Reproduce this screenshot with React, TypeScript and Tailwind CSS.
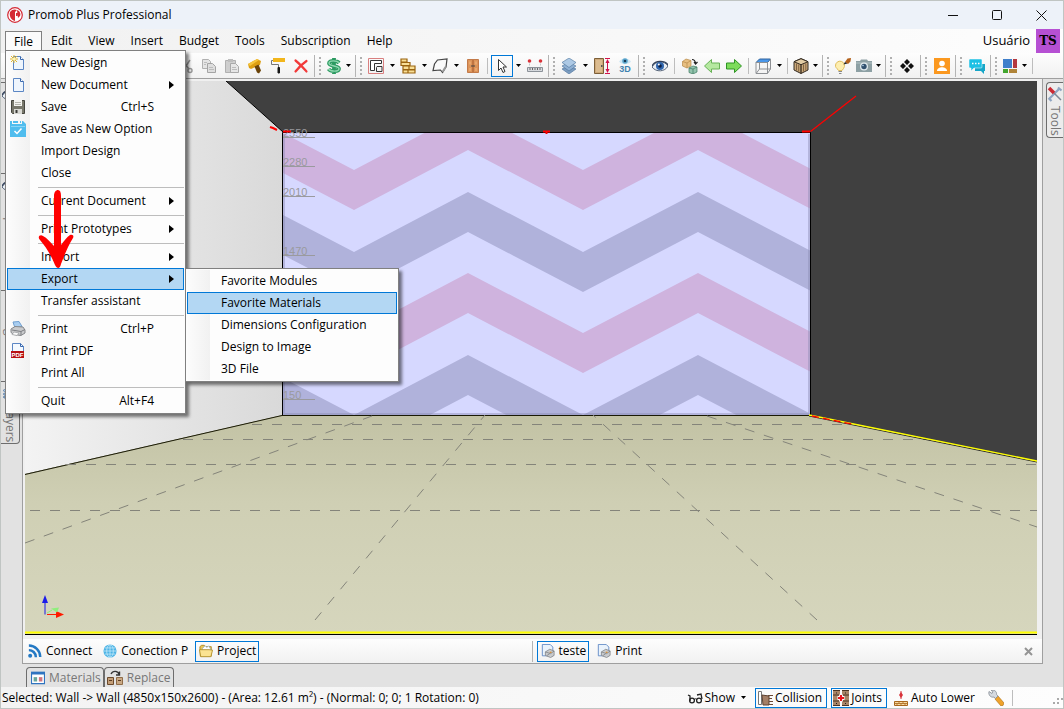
import React from "react";
import clsx from "clsx";

type MenuEntry = { label: string; keys?: string; sub?: boolean; icon?: React.ReactNode } | "-";

const Svg = ({ size = 16, box = 16, children }: { size?: number; box?: number; children: React.ReactNode }) => (
    <svg width={size} height={size} viewBox={`0 0 ${box} ${box}`} fill="none" aria-hidden="true" className="shrink-0">
        {children}
    </svg>
);

/* ---------- menu icons ---------- */

const PagePath = () => (
    <>
        <path d="M3.500 1.500h7l3 3v10h-10z" fill="#eef5fd" stroke="#5b86c4" />
        <path d="M10.500 1.500v3h3" fill="#fff" stroke="#3a68ad" />
    </>
);

const NewDesignIcon = () => (
    <Svg>
        <PagePath />
        <path d="M4 0v8M0 4h8M1 1l6 6M7 1L1 7" stroke="#e0b32a" />
        <circle cx="4" cy="4" r="1.500" fill="#fff6b0" />
    </Svg>
);

const PageIcon = () => <Svg><PagePath /></Svg>;

const SaveIcon = () => (
    <Svg>
        <path d="M1.500 1.500h13v13h-12l-1-1z" fill="#77776b" stroke="#45453e" />
        <path d="M4 1h8v6H4z" fill="#f3f3ef" />
        <path d="M5 3.500h6M5 5.500h6" stroke="#b5b5ad" />
        <path d="M4 10h8v5H4z" fill="#d9d9d4" />
        <path d="M5.500 11h2v3h-2z" fill="#3b3b36" />
    </Svg>
);

const SaveOptionIcon = () => (
    <Svg>
        <path d="M0 0h2v3h10V0h1l3 3v13H0z" fill="#50bdee" />
        <path d="M3 0h5v2H3zM10 0h1v2h-1z" fill="#50bdee" />
        <path d="M1 5.500h14" stroke="#8ad5f5" />
        <path d="M4.500 10l2.500 2.500 4.500-5" stroke="#fff" strokeWidth="1.500" />
    </Svg>
);

const PrinterIcon = () => (
    <Svg>
        <path d="M3 1l6-.5 3 5-7 1.500z" fill="#a8cdf0" stroke="#6f9fd0" />
        <path d="M1 8l4-2.500 8 .5 2 3v3l-4 2.500-7-1-3-2z" fill="#c9cacc" stroke="#85878a" />
        <path d="M2 9l9 1.500 4-2M11 10.500V14" stroke="#7c7e82" />
        <path d="M4 11l5 1-2 2.500-5-1z" fill="#fafafa" stroke="#97999c" strokeWidth=".7" />
    </Svg>
);

const PdfIcon = () => (
    <Svg>
        <path d="M2.500.5h8l3 3v11h-11z" fill="#f4f9fe" stroke="#5b86c4" />
        <path d="M10.500.5v3h3" stroke="#3a68ad" />
        <path d="M1 8h13v7H1z" fill="#b80f12" />
        <text x="7.500" y="14" textAnchor="middle" fontSize="6" fontWeight="700" fill="#fff" fontFamily="Liberation Sans, sans-serif">PDF</text>
    </Svg>
);

/* ---------- toolbar icons ---------- */

const CutIcon = () => (
    <Svg>
        <path d="M4 2l7 9M12 2L6 11" stroke="#9b9b9b" strokeWidth="1.500" />
        <circle cx="4.500" cy="12.500" r="2" stroke="#9b9b9b" strokeWidth="1.500" />
        <circle cx="12" cy="12.500" r="2" stroke="#9b9b9b" strokeWidth="1.500" />
    </Svg>
);

const CopyIcon = () => (
    <Svg>
        <path d="M1.500 1.500h6l2 2v7h-8z" fill="#e4e4e4" stroke="#b0b0b0" />
        <path d="M6.500 5.500h5l3 3v6h-8z" fill="#dedede" stroke="#a4a4a4" />
        <path d="M8 9.500h4M8 11.500h5M3 4.500h3M3 6.500h2" stroke="#bcbcbc" />
    </Svg>
);

const PasteIcon = () => (
    <Svg>
        <path d="M1.500 2.500h10v12h-10z" fill="#cecece" stroke="#b0b0b0" />
        <path d="M4 1h5v3H4z" fill="#bdbdbd" />
        <path d="M6.500 5.500h5l3 3v6h-8z" fill="#e6e6e6" stroke="#a9a9a9" />
        <path d="M8 9.500h4M8 11.500h5" stroke="#bcbcbc" />
    </Svg>
);

const BrushIcon = () => (
    <Svg>
        <path d="M1 6l9-5 4 2-1 4-9 4-2-1z" fill="#dd9e10" />
        <path d="M1 6l9-5 2 1-9 6z" fill="#f6c53c" />
        <path d="M7.500 8.500l4-2 2.500 6-2 3-2-1z" fill="#6a4308" />
    </Svg>
);

const RollerIcon = () => (
    <Svg>
        <path d="M3 0h12v4H3z" fill="#f2b61c" />
        <path d="M3 2.500H1.500V6.500h7V10" stroke="#777" />
        <path d="M8 9.500h1.500v5.500H8z" fill="#161616" stroke="#161616" />
    </Svg>
);

const DeleteIcon = () => (
    <Svg>
        <path d="M2.500 2.500c4 3 7 6.500 11 11M13.500 3C9 6 6 9 2.500 13.500" stroke="#f23a3a" strokeWidth="2.200" strokeLinecap="round" />
    </Svg>
);

const DollarIcon = () => (
    <Svg>
        <path d="M13 5C11 2.300 3 2 3 5.300S13 7.500 13 10.700 4.500 13.800 2.500 11M8 0v16" stroke="#2b9a60" strokeWidth="3.800" />
        <path d="M13 5C11 2.300 3 2 3 5.300S13 7.500 13 10.700 4.500 13.800 2.500 11" stroke="#8fd8b0" strokeWidth="1.400" />
    </Svg>
);

const RoomIcon = () => (
    <Svg>
        <path d="M.5.5h15v15H.5z" stroke="#d98080" />
        <path d="M2.500 2.500h11v3h-7v7h-4z" fill="#fff" stroke="#333" />
        <path d="M9 8.500h5v5H8.500V9.500z" fill="#f2f2f2" stroke="#333" />
    </Svg>
);

const BricksIcon = () => (
    <Svg>
        <g fill="#f9df96" stroke="#9a6410" strokeWidth="1.200">
            <path d="M1 1h6v3H1zM1 4.500h9V7.500H1zM3 8h6v3.500H3zM9 8h6v3.500H9zM3 12h5v3H3zM8 12h7v3H8z" />
        </g>
    </Svg>
);

const ShapeIcon = () => (
    <Svg>
        <path d="M5.500 2L15 1l-1 8-3.500 5.500L8.500 12 1 12.500 2.500 6z" fill="#f9f9f9" stroke="#444" strokeWidth="1.200" />
        <path d="M13.500 9L10.500 14" stroke="#999" strokeWidth="2" />
    </Svg>
);

const CabinetIcon = () => (
    <Svg>
        <path d="M2.500 1.500h11v13h-11z" fill="#dc9459" stroke="#c37a49" />
        <path d="M8 2v12" stroke="#a4562a" />
        <path d="M4 3.500h2v3H4zM10 3.500h2v3h-2zM4 10h2v3H4zM10 10h2v3h-2z" fill="#e9a66d" />
        <path d="M7 7v2M9 7v2" stroke="#444" />
    </Svg>
);

const CursorIcon = () => (
    <Svg>
        <path d="M4.500 1.500v11l2.500-2.500 2 4.500 2-1-2-4.500h3.500z" fill="#fff" stroke="#333" />
    </Svg>
);

const MeasureIcon = () => (
    <Svg>
        <path d="M.5 9.500h15v4H.5z" fill="#d7dade" stroke="#8c9299" />
        <path d="M3 10v2M5.500 10v2M8 10v2M10.500 10v2M13 10v2" stroke="#666" />
        <circle cx="2.500" cy="3" r="1.800" fill="#d9343a" />
        <circle cx="13.500" cy="3" r="1.800" fill="#d9343a" />
        <path d="M2.500 5.500v2M13.500 5.500v2" stroke="#c8c8c8" />
    </Svg>
);

const LayersIcon = () => (
    <Svg>
        <g stroke="#4a7099" strokeWidth=".6">
            <path d="M8 7l7 4-7 5-7-5z" fill="#7b9cc0" />
            <path d="M8 4l7 4-7 5-7-5z" fill="#8fb0d3" />
            <path d="M8 0l7 4.500-7 5-7-5z" fill="#adc9e5" />
        </g>
    </Svg>
);

const HeightIcon = () => (
    <Svg>
        <path d="M.5.5h9v15h-9z" fill="#cda878" stroke="#7d5f38" />
        <path d="M2 2h6v12H2z" fill="#dbbb8f" />
        <path d="M7 7h1.500v2H7z" fill="#555" />
        <path d="M11 .5h5M11 15.500h5M13.500 2v12" stroke="#d3124a" />
        <path d="M11.500 5l2-4 2 4zM11.500 11l2 4 2-4z" fill="#d3124a" />
    </Svg>
);

const ThreeDIcon = () => (
    <Svg>
        <path d="M2 3.500c3-4 9-4 12 0-3 3.500-9 3.500-12 0z" fill="#cfe7f4" />
        <circle cx="8" cy="3" r="2.800" fill="#5fa9cf" />
        <circle cx="8" cy="3" r="1.300" fill="#173a57" />
        <text x="8" y="14" textAnchor="middle" fontSize="9" fontWeight="700" fill="#3f83b0" fontFamily="Liberation Sans, sans-serif">3D</text>
    </Svg>
);

const EyeIcon = () => (
    <Svg>
        <path d="M0 9C3 2.500 13 2.500 16 8c-3 6-12 6.500-16 1z" fill="#e9eef4" stroke="#56657a" />
        <circle cx="8" cy="8" r="4" fill="#2e65ad" />
        <circle cx="8" cy="8" r="1.800" fill="#0c1e42" />
        <circle cx="6.800" cy="6.500" r="1" fill="#fff" />
        <path d="M0 8C3 2 13 2 16 7" stroke="#33415a" strokeWidth="1.300" />
    </Svg>
);

const ReplaceCubesIcon = () => (
    <Svg>
        <path d="M.5 3.500L4 1l5 1.500V8l-4 2-4.500-2z" fill="#e7bf82" stroke="#b88a48" strokeWidth=".7" />
        <path d="M.5 3.500L5 5l4-2.500M5 5v5" stroke="#b88a48" strokeWidth=".7" />
        <path d="M7 10l4-2 4 1v5l-4 2-4-1.500z" fill="#93c3ad" stroke="#3d7a60" strokeWidth=".7" />
        <path d="M7 10l4 1 4-2M11 11v5" stroke="#3d7a60" strokeWidth=".7" />
        <path d="M10 1.500c2 0 3 .5 3.500 3.500M12 4l1.500 2L15.500 4" stroke="#222" strokeWidth="1.200" />
    </Svg>
);

const ArrowIcon = ({ flip }: { flip?: boolean }) => (
    <Svg>
        <path
            d={flip ? "M15.500 8L8.500 1.500v3.500h-8v6h8v3.500z" : "M.5 8l7-6.500v3.500h8v6h-8v3.500z"}
            fill={flip ? "#7ddc5b" : "#b5e8a0"}
            stroke={flip ? "#2e9424" : "#68b257"}
        />
    </Svg>
);

const WireBoxIcon = () => (
    <Svg>
        <path d="M1 4.500L4.500 1h11L12.500 4.500z" fill="#4a97ea" stroke="#33659c" />
        <path d="M1 4.500h11.500v11H1zM12.500 15.500l3-4.500V1M4.500 5v6l-3 4M4.500 11h11" stroke="#8d9094" />
    </Svg>
);

const WoodCubeIcon = () => (
    <Svg>
        <path d="M8 .7l7 3V12l-7 3.500L1 12V3.700z" fill="#c9a87a" stroke="#332a20" />
        <path d="M1 3.700l7 3 7-3-7-3z" fill="#e3cda6" stroke="#332a20" />
        <path d="M8 6.500v9" stroke="#332a20" strokeWidth="1.300" />
        <path d="M3.500 5.500v7M5.700 6.500v7M10.500 6.500v7M12.800 5.500v7" stroke="#6d5234" strokeWidth=".8" />
    </Svg>
);

const BulbIcon = () => (
    <Svg>
        <path d="M.5 8a4.500 4.500 0 1 1 8 2.500L7 12.500H3.500L2 10.500C1 9.500.5 9 .5 8z" fill="#fdeeb0" stroke="#e0bd5c" />
        <path d="M3.500 13.500H7M4 15.500h2.500" stroke="#888" strokeWidth="1.200" />
        <path d="M10 4l2.500-3.500L16 0l-.5 3.500L13 6z" fill="#b4621c" />
        <path d="M8.500 6.500L10 4l2.500 1.500z" fill="#222" />
    </Svg>
);

const CameraIcon = () => (
    <Svg>
        <path d="M0 3h4l1-1.500h6L12 3h4v11H0z" fill="#8da0a4" />
        <path d="M0 5h16" stroke="#b4c3c6" />
        <circle cx="8" cy="8.500" r="4" fill="#e1eaee" />
        <circle cx="8" cy="8.500" r="2.700" fill="#31506e" />
        <circle cx="7" cy="7.500" r=".8" fill="#b9d8ef" />
    </Svg>
);

const DiamondsIcon = () => (
    <Svg>
        <path d="M8 1l3 3-3 3-3-3zM4 5l3 3-3 3-3-3zM12 5l3 3-3 3-3-3zM8 9l3 3-3 3-3-3z" fill="#111" />
    </Svg>
);

const PersonIcon = () => (
    <Svg>
        <path d="M0 0h16v16H0z" fill="#fb981f" />
        <circle cx="8" cy="5.500" r="2.800" fill="#fff" />
        <path d="M3 13c0-5 10-5 10 0z" fill="#fff" />
    </Svg>
);

const ChatIcon = () => (
    <Svg>
        <path d="M6 6h10v7h-1v3l-3-3H6z" fill="#17a6c8" />
        <path d="M1 1h11a1 1 0 0 1 1 1v7a1 1 0 0 1-1 1H5l-3 3v-3H1a1 1 0 0 1-1-1V2a1 1 0 0 1 1-1z" fill="#1cc0e4" stroke="#fff" strokeWidth=".5" />
        <path d="M3 5.500h1.500M6 5.500h1.500M9 5.500h1.500" stroke="#fff" strokeWidth="1.500" />
    </Svg>
);

const TilesIcon = () => (
    <Svg>
        <path d="M1 1h9v9H1z" fill="#3f7fcb" />
        <path d="M11 1h4v9h-4z" fill="#b4383f" />
        <path d="M1 11h5v4H1z" fill="#42a52e" />
        <path d="M7 11h8v4H7z" fill="#b08439" />
    </Svg>
);

/* ---------- lower bar icons ---------- */

const FeedIcon = () => (
    <Svg size={14}>
        <circle cx="2.500" cy="13.500" r="2.300" fill="#2479c4" />
        <path d="M1 7c4 0 8 3 8 8M1 1.800c7 0 13 5.500 13 13" stroke="#2479c4" strokeWidth="2.800" />
    </Svg>
);

const GlobeIcon = () => (
    <Svg size={14}>
        <circle cx="8" cy="8" r="7.500" fill="#4db4e6" />
        <path d="M1 8h14M2 4.500h12M2 11.500h12M8 1v14" stroke="#c6e9f9" strokeWidth=".9" />
        <ellipse cx="8" cy="8" rx="3.800" ry="7.300" stroke="#c6e9f9" strokeWidth=".9" />
    </Svg>
);

const FolderIcon = () => (
    <Svg size={14}>
        <path d="M1 3l2-1.500h3L7.500 3H14v11H1.500z" fill="#e8c65a" stroke="#ab8721" />
        <path d="M4 5l3-3 2 2 2-2 3 5H4z" fill="#fff" stroke="#7aa0cf" strokeWidth=".7" />
        <path d="M.5 6.500h11l4 .5-2 7.500H2z" fill="#fbe391" stroke="#b08f2c" />
    </Svg>
);

const PagePrintIcon = () => (
    <Svg size={14}>
        <path d="M1.500.5h9l3 3v10h-12z" fill="#eaf3fc" stroke="#5b86c4" />
        <path d="M5 9l5-3 5 2v5l-4 2.500L5 13z" fill="#c9cbce" stroke="#75787c" strokeWidth=".8" />
        <path d="M5 9l6 2 4-3M7 13l3-2" stroke="#75787c" strokeWidth=".8" />
        <path d="M10 9.500h2" stroke="#d78e33" strokeWidth="1.500" />
    </Svg>
);

const MaterialsIcon = () => (
    <Svg size={14}>
        <path d="M.5 1.500h15v13H.5z" fill="#fff" stroke="#2f74c0" strokeWidth="1.500" />
        <path d="M0 1h16v3H0z" fill="#2f74c0" />
        <path d="M3 7h4v5H3z" fill="#69a79c" />
        <path d="M9 7h4v5H9z" fill="#d1757e" />
    </Svg>
);

const SwapIcon = () => (
    <Svg>
        <path d="M.5 7.500h6v7h-6z" fill="#c39e78" stroke="#6b4a2c" />
        <path d="M9.500 7.500h6v7h-6z" fill="#c9a884" stroke="#8f6c48" />
        <path d="M2 10.500h3M11 10.500h3" stroke="#5b3c20" />
        <path d="M4 4c2-4 7-3 8 0M12.500 1.500V5H9" stroke="#333" strokeWidth="1.400" />
    </Svg>
);

const GlassesIcon = () => (
    <Svg>
        <path d="M1 5l2 1v5M10 5l4-1 1 5" stroke="#222" strokeWidth="1.300" />
        <circle cx="5" cy="10.500" r="2.400" stroke="#222" strokeWidth="1.300" />
        <circle cx="12" cy="10.500" r="2.400" stroke="#222" strokeWidth="1.300" />
        <path d="M7 9.500q1.500-1.500 3 0" stroke="#222" />
    </Svg>
);

const CollisionIcon = () => (
    <Svg>
        <path d="M1.500 1.500h3v13h-3z" fill="#fff" stroke="#777" />
        <path d="M5 5l7 1v9H6z" fill="#a47f66" stroke="#5c4231" />
        <path d="M11 5.500h5M12 8.500h3M12 11.500h4M12 14.500h4" stroke="#6b4a35" />
    </Svg>
);

const JointsIcon = () => (
    <Svg>
        <path d="M0 0h7v16H0zM9 0h7v16H9z" fill="#a98567" />
        <path d="M0 .5h7M9 .5h7M0 5h7M9 5h7M0 11h7M9 11h7M0 15.500h7M9 15.500h7" stroke="#4b3525" />
        <path d="M3 3h1M12 3h1M3 13.500h1M12 13.500h1" stroke="#222" />
        <path d="M8 4.500v7M4.500 8h7" stroke="#fff" strokeWidth="4" />
        <path d="M8 5v6M5 8h6" stroke="#e8141c" strokeWidth="2.200" />
    </Svg>
);

const AutoLowerIcon = () => (
    <Svg>
        <path d="M8 1v8" stroke="#d8323a" />
        <path d="M6 5l2-3 2 3-2 3z" fill="#d8323a" />
        <path d="M1.500 11.500h13v4h-13z" fill="#f7dba2" stroke="#a8671c" />
        <path d="M2 13.500h12M6 12v1.500M10 12v1.500M4 13.500v2M8 13.500v2M12 13.500v2" stroke="#a8671c" strokeWidth=".8" />
    </Svg>
);

const WrenchIcon = () => (
    <Svg>
        <path d="M8 7l2-1 6 7-1 2.500-2 .5-6-7z" fill="#f0a32b" stroke="#a86b12" strokeWidth=".6" />
        <path d="M1 1.500l3 2 1-2L3 .3c3-.8 6 1 5.500 4L10 6 7.500 8.500 6 7C3 8 0 5 1 1.500z" fill="#d5dae0" stroke="#868d96" strokeWidth=".8" />
    </Svg>
);

const ToolsIcon = () => (
    <Svg>
        <path d="M2 13L13 2M11 1.500l3.500 3M1.500 12l3 3" stroke="#8fa5c2" strokeWidth="2.200" />
        <path d="M2 2l5 5" stroke="#cb2b35" strokeWidth="3.500" />
        <path d="M7 7l7 7" stroke="#7d8896" strokeWidth="1.500" />
    </Svg>
);

/* ---------- data ---------- */

const menus = ["Edit", "View", "Insert", "Budget", "Tools", "Subscription", "Help"];

const fileMenu: MenuEntry[] = [
    { label: "New Design", icon: <NewDesignIcon /> },
    { label: "New Document", icon: <PageIcon />, sub: true },
    { label: "Save", icon: <SaveIcon />, keys: "Ctrl+S" },
    { label: "Save as New Option", icon: <SaveOptionIcon /> },
    { label: "Import Design" },
    { label: "Close" },
    "-",
    { label: "Current Document", sub: true },
    "-",
    { label: "Print Prototypes", sub: true },
    "-",
    { label: "Import", sub: true },
    { label: "Export", sub: true },
    { label: "Transfer assistant" },
    "-",
    { label: "Print", icon: <PrinterIcon />, keys: "Ctrl+P" },
    { label: "Print PDF", icon: <PdfIcon /> },
    { label: "Print All" },
    "-",
    { label: "Quit", keys: "Alt+F4" },
];

const exportMenu: MenuEntry[] = [
    { label: "Favorite Modules" },
    { label: "Favorite Materials" },
    { label: "Dimensions Configuration" },
    { label: "Design to Image" },
    { label: "3D File" },
];

/* ---------- menu ---------- */

const Menu = ({ items, active, className, children }: {
    items: MenuEntry[];
    active: string;
    className?: string;
    children?: React.ReactNode;
}) => (
    <div
        role="menu"
        className={clsx(
            "absolute border border-[#808080] bg-[#fdfdfd] p-px shadow-[3px_3px_3px_rgba(0,0,0,0.5)]",
            className
        )}
    >
        <div className="bg-linear-to-r from-[#fcfcfc] to-[#f1f1f1] bg-[length:23px_100%] bg-no-repeat">
            {items.map((item, i) =>
                item === "-" ? (
                    <div key={i} className="ml-[31px] flex h-[6px] items-center">
                        <div className="h-px w-full bg-[#bdbdbd]" />
                    </div>
                ) : (
                    <button
                        key={item.label}
                        role="menuitem"
                        className={clsx(
                            "flex h-[22px] w-full items-center border pr-[9px] text-left whitespace-nowrap",
                            item.label === active ? "border-[#0078d7] bg-[#b3d7f3]" : "border-transparent"
                        )}
                    >
                        <span className="flex w-[33px] shrink-0 pl-[2px]">{item.icon}</span>
                        <span className="flex-1">{item.label}</span>
                        {item.keys && <span className="pr-5">{item.keys}</span>}
                        {item.sub && (
                            <svg width="5" height="8" viewBox="0 0 5 8" aria-hidden="true">
                                <path d="M0 0l5 4-5 4z" fill="#000" />
                            </svg>
                        )}
                    </button>
                )
            )}
        </div>
        {children}
    </div>
);

/* ---------- toolbar ---------- */

const Caret = ({ className }: { className?: string }) => (
    <svg width="5" height="3" viewBox="0 0 5 3" className={className} aria-hidden="true">
        <path d="M0 0h5L2.500 3z" fill="#000" />
    </svg>
);

const Tool = ({ label, narrow, children }: { label: string; narrow?: boolean; children: React.ReactNode }) => (
    <button aria-label={label} className={clsx("flex shrink-0 items-center justify-center", narrow ? "w-[22px]" : "w-[23px]")}>
        {children}
    </button>
);

const DropTool = ({ label, tight, pressed, children }: {
    label: string;
    tight?: boolean;
    pressed?: boolean;
    children: React.ReactNode;
}) => (
    <button aria-label={label} className="flex shrink-0 items-center">
        <span
            className={clsx(
                "flex h-[22px] items-center justify-center",
                tight ? "w-5" : "w-[22px]",
                pressed && "border border-[#0078d7]"
            )}
        >
            {children}
        </span>
        <span className={clsx("flex justify-center", tight ? "w-[9px]" : "w-[10px]")}>
            <Caret />
        </span>
    </button>
);

const Sep = () => (
    <div className="flex w-[7px] shrink-0 items-center justify-center">
        <div className="h-4 w-px bg-[#bdbdbd]" />
    </div>
);

const GroupEnd = () => (
    <div className="flex w-3 shrink-0 items-center gap-1 pl-[2px]">
        <div className="h-[22px] w-px bg-[#b4b4b4]" />
        <div className="h-[18px] w-[2px] bg-[repeating-linear-gradient(#b0b0b0_0_2px,transparent_2px_4px)]" />
    </div>
);

const Toolbar = () => (
    <div className="flex h-[25px] shrink-0 items-stretch overflow-hidden bg-linear-to-b from-[#fdfdfd] to-[#f1f1f1] pl-[173px]">
        <Tool label="Cut"><CutIcon /></Tool>
        <Tool label="Copy"><CopyIcon /></Tool>
        <Tool label="Paste"><PasteIcon /></Tool>
        <Tool label="Format brush"><BrushIcon /></Tool>
        <Tool label="Paint"><RollerIcon /></Tool>
        <Tool label="Delete"><DeleteIcon /></Tool>
        <GroupEnd />
        <DropTool label="Budget" tight><DollarIcon /></DropTool>
        <GroupEnd />
        <DropTool label="Room"><RoomIcon /></DropTool>
        <DropTool label="Walls"><BricksIcon /></DropTool>
        <DropTool label="Shapes"><ShapeIcon /></DropTool>
        <Tool label="Doors"><CabinetIcon /></Tool>
        <Sep />
        <DropTool label="Select" pressed><CursorIcon /></DropTool>
        <Tool label="Measure"><MeasureIcon /></Tool>
        <GroupEnd />
        <DropTool label="Layers"><LayersIcon /></DropTool>
        <Tool label="Dimensions"><HeightIcon /></Tool>
        <Tool label="3D view"><ThreeDIcon /></Tool>
        <GroupEnd />
        <Tool label="Visibility"><EyeIcon /></Tool>
        <Sep />
        <Tool label="Replace"><ReplaceCubesIcon /></Tool>
        <Tool label="Previous" narrow><ArrowIcon /></Tool>
        <Tool label="Next" narrow><ArrowIcon flip /></Tool>
        <Sep />
        <DropTool label="Views"><WireBoxIcon /></DropTool>
        <Sep />
        <DropTool label="Render mode" tight><WoodCubeIcon /></DropTool>
        <GroupEnd />
        <Tool label="Lighting" narrow><BulbIcon /></Tool>
        <DropTool label="Camera" tight><CameraIcon /></DropTool>
        <GroupEnd />
        <Tool label="Modules"><DiamondsIcon /></Tool>
        <GroupEnd />
        <Tool label="Account"><PersonIcon /></Tool>
        <GroupEnd />
        <Tool label="Chat"><ChatIcon /></Tool>
        <GroupEnd />
        <DropTool label="Panels" tight><TilesIcon /></DropTool>
        <Sep />
    </div>
);

/* ---------- 3D scene ---------- */

const peaks = [239, 468, 698, 927];
const bands = [0, 1, 2, 3];

// zigzag from left to right along the peaks, then back again one thickness lower
const bandPoints = (top: number) => {
    const upper: string[] = [];
    const lower: string[] = [];
    peaks.forEach((x) => {
        upper.push(`${x},${top}`, `${x + 115},${top + 60}`);
        lower.unshift(`${x + 115},${top + 100}`, `${x},${top + 40}`);
    });
    return [...upper, ...lower].join(" ");
};

const levels = [
    { text: "2550", y: 137 },
    { text: "2280", y: 166 },
    { text: "2010", y: 196 },
    { text: "1470", y: 255 },
    { text: "150", y: 399 },
];

const Scene = () => (
    <svg
        viewBox="25 81 1012 554"
        preserveAspectRatio="none"
        className="mt-[2px] mr-[5px] ml-[2px] min-h-0 flex-1"
        role="img"
        aria-label="Room view"
    >
        <defs>
            <linearGradient id="side" x1="0" x2="1">
                <stop offset="0" stopColor="#f3f3f3" />
                <stop offset="1" stopColor="#d9d9d9" />
            </linearGradient>
            <linearGradient id="floor" x1="0" x2="0" y1="0" y2="1">
                <stop offset="0" stopColor="#c2c2a4" />
                <stop offset=".4" stopColor="#cfcfb4" />
                <stop offset="1" stopColor="#d6d6bd" />
            </linearGradient>
            <clipPath id="wall"><path d="M283 133h527v282H283z" /></clipPath>
        </defs>
        <path d="M25 81h1012v554H25z" fill="#404040" />
        <path d="M25 81h201l57 51v283L25 474z" fill="url(#side)" />
        <path d="M226 81l57 51" stroke="#000" />

        <g clipPath="url(#wall)">
            <path d="M283 133h527v282H283z" fill="#d6d8ff" />
            {bands.map((i) => (
                <polygon key={i} points={bandPoints(110 + i * 82 - (i > 1 ? 1 : 0))} fill={i % 2 ? "#b0b2db" : "#cfb3de"} />
            ))}
        </g>
        <path d="M284 134v280h525V134" stroke="#8c8cb4" strokeOpacity=".45" strokeWidth="2" fill="none" />
        <path d="M282.500 132.500h528v283h-528z" stroke="#000" fill="none" />

        {levels.map((l) => (
            <g key={l.text}>
                <text x="283" y={l.y} fontSize="11" fill="#9a9a9e" fontFamily="Liberation Sans, sans-serif">{l.text}</text>
                <path d={`M283 ${l.y + 0.5}h32`} stroke="#9a9a9e" />
            </g>
        ))}

        <path d="M25 474l257-59h528l227 46v174H25z" fill="url(#floor)" />
        <path d="M25 474.500l257-59h528" stroke="#1a1a05" fill="none" />
        <g stroke="#84847a" strokeDasharray="10 10" fill="none">
            <path d="M252 424.500h600M183 439.500h744M66 464.500h971M30 510.500h1007" />
            <path d="M25 543L372 416M707 416l330 111" />
            <path d="M315 620L485 415M817 620L593 415" />
        </g>
        <path d="M809 416l228 46" stroke="#222" />
        <path d="M809 415l228 46" stroke="#ffff00" strokeWidth="1.300" />
        <path d="M812 416l42 8.500" stroke="#f00" strokeDasharray="7 4" strokeWidth="1.300" />

        <path d="M810.500 131.500L856 96" stroke="#f00" strokeWidth="1.300" />
        <path d="M270 127l3 1 4 2M283 131.500h8M802 131.500h8M543 131.500h7M546.500 131v3" stroke="#f00" strokeWidth="2" fill="none" />
        <path d="M25 632.500h1012" stroke="#ffff00" strokeWidth="2" />
        <path d="M25 634.500h1012" stroke="#000" />

        <path d="M45 614.500V602" stroke="#1a1aea" />
        <path d="M45 595l3 8h-6z" fill="#1a1aea" />
        <path d="M47 614.500h10" stroke="#ff1a00" />
        <path d="M56 611l8 3.500-8 3.500z" fill="#ff1a00" />
        <path d="M51 608.500l8-1-2 5z" fill="#8fef7c" />
        <path d="M47 613l5-3" stroke="#8fef7c" />
    </svg>
);

/* ---------- frame parts ---------- */

const ViewTab = ({ icon, label, active }: { icon: React.ReactNode; label: string; active?: boolean }) => (
    <button
        className={clsx(
            "flex h-[21px] items-center gap-1 border pr-[2px] pl-[3px] whitespace-nowrap",
            active ? "border-[#0078d7]" : "border-transparent"
        )}
    >
        {icon}
        {label}
    </button>
);

const StatusButton = ({ icon, label, active, children }: {
    icon: React.ReactNode;
    label: string;
    active?: boolean;
    children?: React.ReactNode;
}) => (
    <button
        className={clsx(
            "flex h-5 items-center gap-[2px] border pr-1 pl-px whitespace-nowrap",
            active ? "border-[#0078d7]" : "border-transparent"
        )}
    >
        {icon}
        {label}
        {children}
    </button>
);

const TitleBar = () => (
    <header className="flex h-7 shrink-0 items-center bg-[#edf2f9] pl-[6px]">
        <Svg size={16}>
            <circle cx="8" cy="8" r="7.300" fill="#fff" stroke="#d42a35" strokeWidth="1.200" />
            <path d="M3 5c2-3 5-3 7-2l-2 2v9c-4-1-6-5-5-9z" fill="#d42a35" />
            <path d="M9 6h1.500v3H9zM10 3c3 1 4 4 3 6l-2 2z" fill="#d42a35" />
        </Svg>
        <h1 className="pl-[5px]">Promob Plus Professional</h1>
        <div className="ml-auto flex items-center">
            <button aria-label="Minimize" className="flex w-11 justify-center">
                <svg width="10" height="10" viewBox="0 0 10 10"><path d="M0 5.500h10" stroke="#111" /></svg>
            </button>
            <button aria-label="Maximize" className="flex w-11 justify-center">
                <svg width="10" height="10" viewBox="0 0 10 10"><rect x=".5" y=".5" width="9" height="9" rx="1" fill="none" stroke="#111" /></svg>
            </button>
            <button aria-label="Close" className="flex w-11 justify-center">
                <svg width="11" height="11" viewBox="0 0 11 11"><path d="M.5.5l10 10M10.500.5l-10 10" stroke="#111" /></svg>
            </button>
        </div>
    </header>
);

const RedArrow = () => (
    <svg width="36" height="80" viewBox="0 0 36 80" className="pointer-events-none absolute top-[138px] left-8" aria-hidden="true">
        <path
            d="M20 1c2 0 3 2 3 6v49c3-4 6-8 9-10 3-1 4 1 3 3-5 8-9 18-12 26-1 5-4 5-6 1C13 66 8 58 2 51c-3-3 0-6 3-4 4 2 7 6 11 10V7c0-4 2-6 4-6z"
            fill="#ff0000"
        />
    </svg>
);

const MenuBar = () => (
    <nav className="flex h-6 shrink-0 items-center bg-linear-to-r from-[#f1f1f1] to-[#fdfdfd] pl-1">
        <div className="relative z-10">
            <button className="h-5 border border-b-0 border-[#808080] bg-[#fbfbfb] px-2">File</button>
            <Menu items={fileMenu} active="Export" className="top-full left-0 -mt-px w-[181px]">
                <Menu items={exportMenu} active="Favorite Materials" className="top-[217px] left-[179px] w-[214px]" />
                <RedArrow />
            </Menu>
        </div>
        <div className="flex pl-px">
            {menus.map((m) => (
                <button key={m} className="h-5 px-2">{m}</button>
            ))}
        </div>
        <div className="ml-auto flex items-center gap-[6px] pr-[3px]">
            <span className="text-[13px]">Usuário</span>
            <span className="flex size-6 items-center justify-center bg-[#b650d3] font-['DejaVu_Serif',serif] text-xs font-bold">TS</span>
        </div>
    </nav>
);

const SideTab = ({ label, icon, className }: { label: string; icon: React.ReactNode; className?: string }) => (
    <button className={clsx("flex w-full flex-col items-center gap-1 border border-[#6d6d6d] text-[#777]", className)}>
        {icon}
        <span className="[writing-mode:vertical-rl]">{label}</span>
    </button>
);

export default function App() {
    return (
        <div className="flex h-screen w-full flex-col overflow-hidden border border-[#c0c5c3] bg-[#f0f0f0] font-['Open_Sans',sans-serif] text-xs text-black">
            <TitleBar />
            <MenuBar />
            <Toolbar />

            <main className="flex min-h-0 flex-1">
                <aside className="flex w-[21px] shrink-0 flex-col border-t border-[#9f9f9f] bg-[#e2e2e2] pt-[3px] pr-[2px]">
                    <SideTab label="Modules" icon={<EyeIcon />} className="h-[92px] rounded-r border-l-0 pt-1" />
                    <SideTab label="Properties" icon={<EyeIcon />} className="-mt-px h-[118px] rounded-r border-l-0 pt-1" />
                    <SideTab label="Pages" icon={<PageIcon />} className="-mt-px h-[92px] rounded-r border-l-0 pt-1" />
                    <SideTab label="Layers" icon={<LayersIcon />} className="-mt-px h-[63px] rounded-r border-l-0 pt-1" />
                </aside>

                <section className="flex min-w-0 flex-1 flex-col border border-[#9f9f9f]">
                    <Scene />
                    <div className="mt-1 flex h-[24px] shrink-0 items-center bg-linear-to-b from-[#fdfdfd] to-[#f1f1f1]">
                        <div className="flex w-1/2 items-center gap-1 border-r border-[#b4b4b4] pl-px">
                            <ViewTab icon={<FeedIcon />} label="Connect" />
                            <ViewTab icon={<GlobeIcon />} label="Conection P" />
                            <ViewTab icon={<FolderIcon />} label="Project" active />
                        </div>
                        <div className="flex flex-1 items-center gap-1 pr-[9px] pl-1">
                            <ViewTab icon={<PagePrintIcon />} label="teste" active />
                            <ViewTab icon={<PagePrintIcon />} label="Print" />
                            <button aria-label="Close tab" className="ml-auto">
                                <svg width="9" height="9" viewBox="0 0 9 9"><path d="M1 1l7 7M8 1L1 8" stroke="#949494" strokeWidth="2" /></svg>
                            </button>
                        </div>
                    </div>
                </section>

                <aside className="w-[20px] shrink-0 border-t border-[#9f9f9f] bg-[#e2e2e2] pt-[3px] pl-[3px]">
                    <SideTab label="Tools" icon={<ToolsIcon />} className="h-14 rounded-l border-r-0 bg-[#ececec] pt-[3px]" />
                </aside>
            </main>

            <div className="flex h-[23px] shrink-0 items-end bg-[#e2e2e2] pl-[25px] text-[#777]">
                <button className="flex h-5 items-center gap-1 rounded-t border border-b-0 border-[#6d6d6d] pr-[2px] pl-1">
                    <MaterialsIcon />
                    Materials
                </button>
                <button className="flex h-5 items-center gap-1 rounded-t border border-b-0 border-[#6d6d6d] px-[2px]">
                    <SwapIcon />
                    Replace
                </button>
            </div>

            <footer className="flex h-[21px] shrink-0 items-center bg-linear-to-r from-[#f3f3f3] to-[#fdfdfd] pl-px">
                <span className="whitespace-nowrap">
                    Selected: Wall -&gt; Wall (4850x150x2600) - (Area: 12.61 m²) - (Normal: 0; 0; 1 Rotation: 0)
                </span>
                <div className="ml-auto flex items-center gap-1">
                    <StatusButton icon={<GlassesIcon />} label="Show"><Caret className="ml-1" /></StatusButton>
                    <StatusButton icon={<CollisionIcon />} label="Collision" active />
                    <StatusButton icon={<JointsIcon />} label="Joints" active />
                    <StatusButton icon={<AutoLowerIcon />} label="Auto Lower" />
                    <button aria-label="Settings" className="px-1"><WrenchIcon /></button>
                    <div className="h-4 w-px bg-[#bdbdbd]" />
                </div>
                <div className="ml-10 flex w-[10px] flex-wrap gap-[2px] self-end pb-1" aria-hidden="true">
                    <i className="ml-1 size-[2px] bg-[#aaa]" />
                    <i className="size-[2px] bg-[#aaa]" />
                    <i className="size-[2px] bg-[#aaa]" />
                    <i className="size-[2px] bg-[#aaa]" />
                </div>
            </footer>
        </div>
    );
}
